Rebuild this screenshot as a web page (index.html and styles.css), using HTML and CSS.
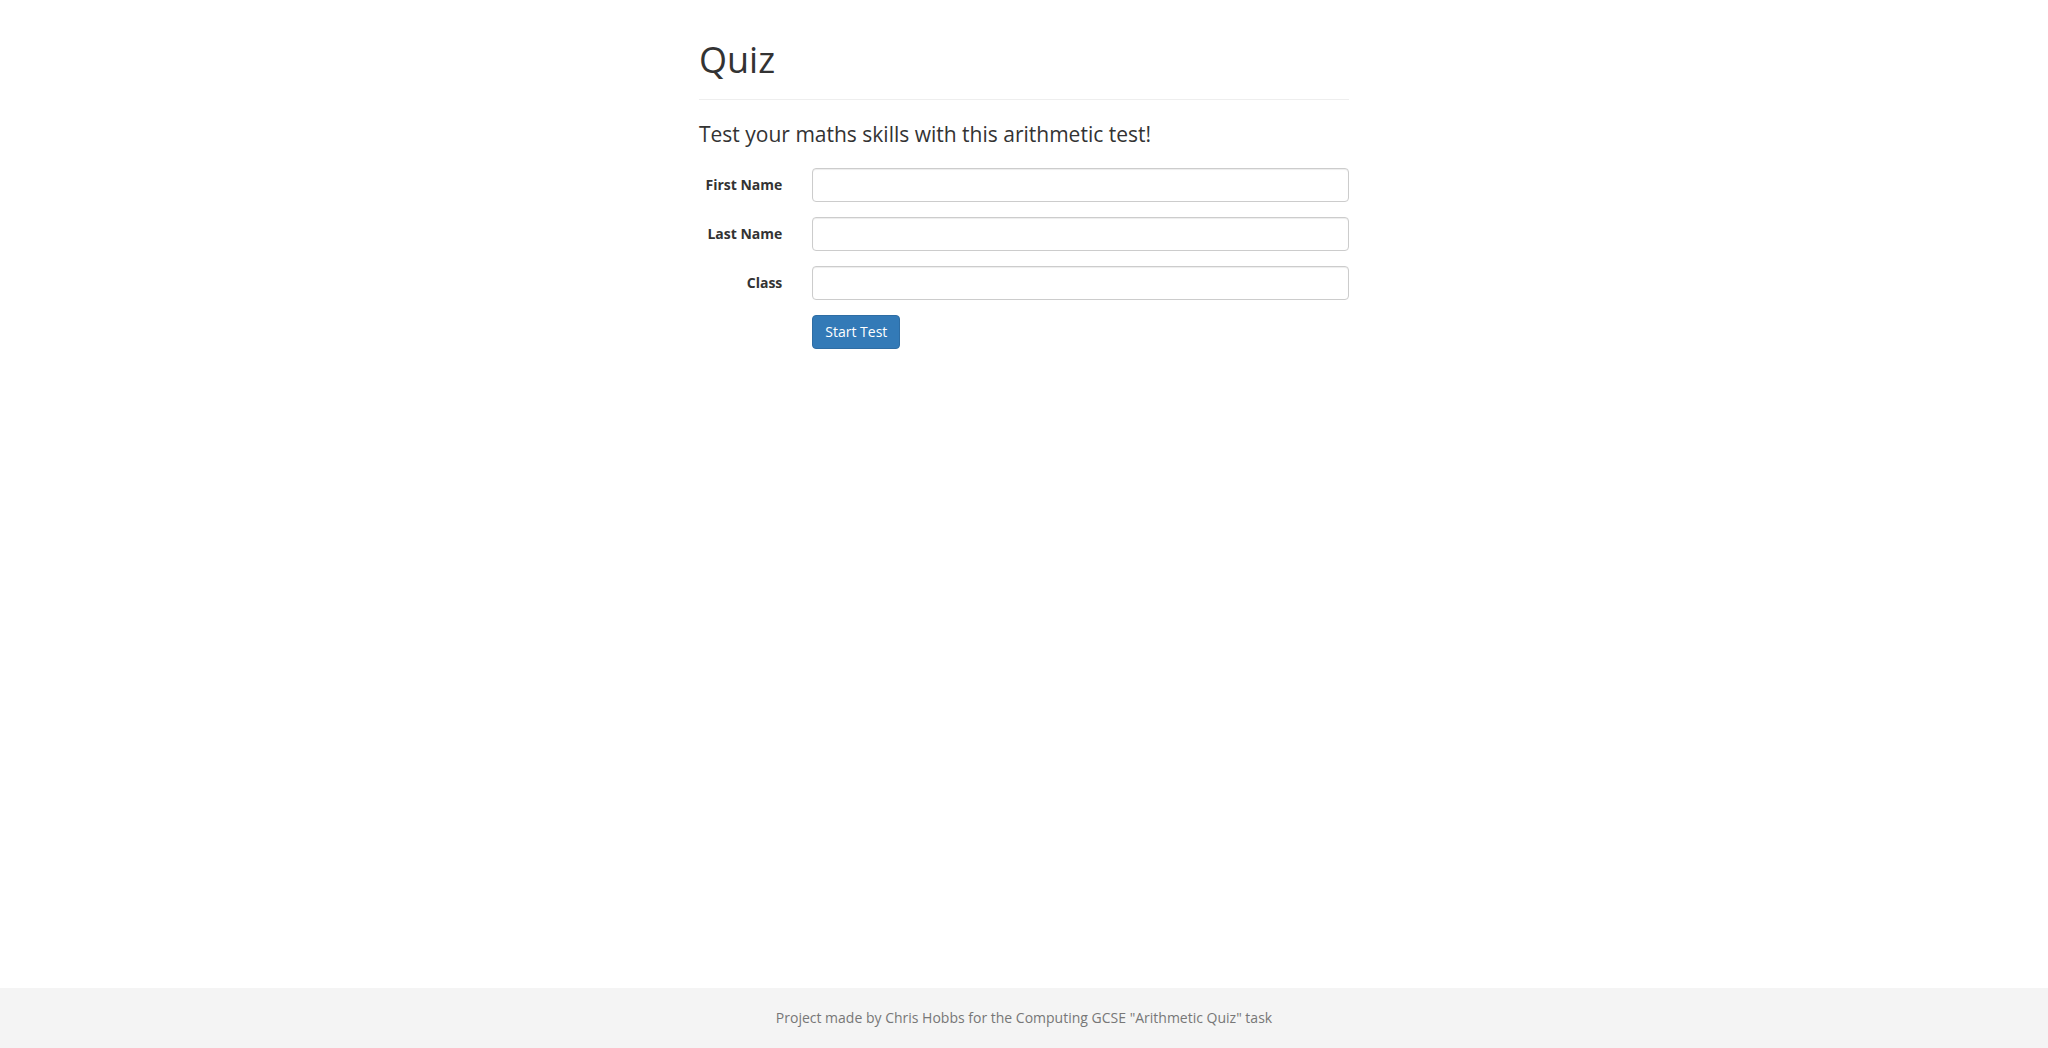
FILE: index.html
```html
<!DOCTYPE html>
<html lang="en">
<head>
<meta charset="utf-8">
<title>Quiz</title>
<link rel="stylesheet" href="styles.css">
</head>
<body>
<main class="container">
  <div class="page-header">
    <h1 class="title">Quiz</h1>
  </div>
  <p class="lead">Test your maths skills with this arithmetic test!</p>
  <form class="form-horizontal">
    <div class="form-group">
      <label class="control-label" for="first">First Name</label>
      <div class="control"><input class="form-control" id="first" type="text"></div>
    </div>
    <div class="form-group">
      <label class="control-label" for="last">Last Name</label>
      <div class="control"><input class="form-control" id="last" type="text"></div>
    </div>
    <div class="form-group">
      <label class="control-label" for="class">Class</label>
      <div class="control"><input class="form-control" id="class" type="text"></div>
    </div>
    <div class="form-group">
      <span class="control-label"></span>
      <div class="control"><button type="button" class="btn btn-primary">Start Test</button></div>
    </div>
  </form>
</main>
<footer class="footer">
  <p class="text-muted">Project made by Chris Hobbs for the Computing GCSE "Arithmetic Quiz" task</p>
</footer>
</body>
</html>
```

FILE: styles.css
```css
* { box-sizing: border-box; }
html, body { margin: 0; height: 100%; }
body {
  font-family: "Open Sans", "Liberation Sans", sans-serif;
  font-size: 14px;
  line-height: 1.42857;
  color: #333;
  background: #fff;
  display: flex;
  flex-direction: column;
  min-height: 100vh;
}
.container {
  width: 680px;
  margin: 0 auto;
  padding: 0 15px;
  flex: 1;
}
.page-header {
  margin: 40px 0 20px;
  padding-bottom: 9px;
  border-bottom: 1px solid #eee;
}
.title {
  margin: 0 0 10px;
  font-size: 36px;
  font-weight: 400;
  line-height: 1.1;
}
.lead {
  margin: 0 0 19px;
  font-size: 21px;
  font-weight: 400;
  line-height: 1.4;
}
.form-horizontal { margin: 0 -15px; }
.form-group {
  display: flex;
  margin-bottom: 15px;
}
.control-label {
  width: 16.6667%;
  padding: 7px 15px 0;
  text-align: right;
  font-weight: 700;
}
.control {
  width: 83.3333%;
  padding: 0 15px;
}
.form-control {
  display: block;
  width: 100%;
  height: 34px;
  padding: 6px 12px;
  font: inherit;
  color: #555;
  background: #fff;
  border: 1px solid #ccc;
  border-radius: 4px;
  box-shadow: inset 0 1px 1px rgba(0,0,0,.075);
}
.btn {
  display: inline-block;
  height: 34px;
  padding: 6px 12px;
  font: inherit;
  line-height: 1.42857;
  border: 1px solid transparent;
  border-radius: 4px;
}
.btn-primary {
  color: #fff;
  background: #337ab7;
  border-color: #2e6da4;
}
.footer {
  height: 60px;
  background: #f4f4f4;
  display: flex;
  align-items: center;
  justify-content: center;
}
.text-muted {
  margin: 0;
  color: #777;
}
```
